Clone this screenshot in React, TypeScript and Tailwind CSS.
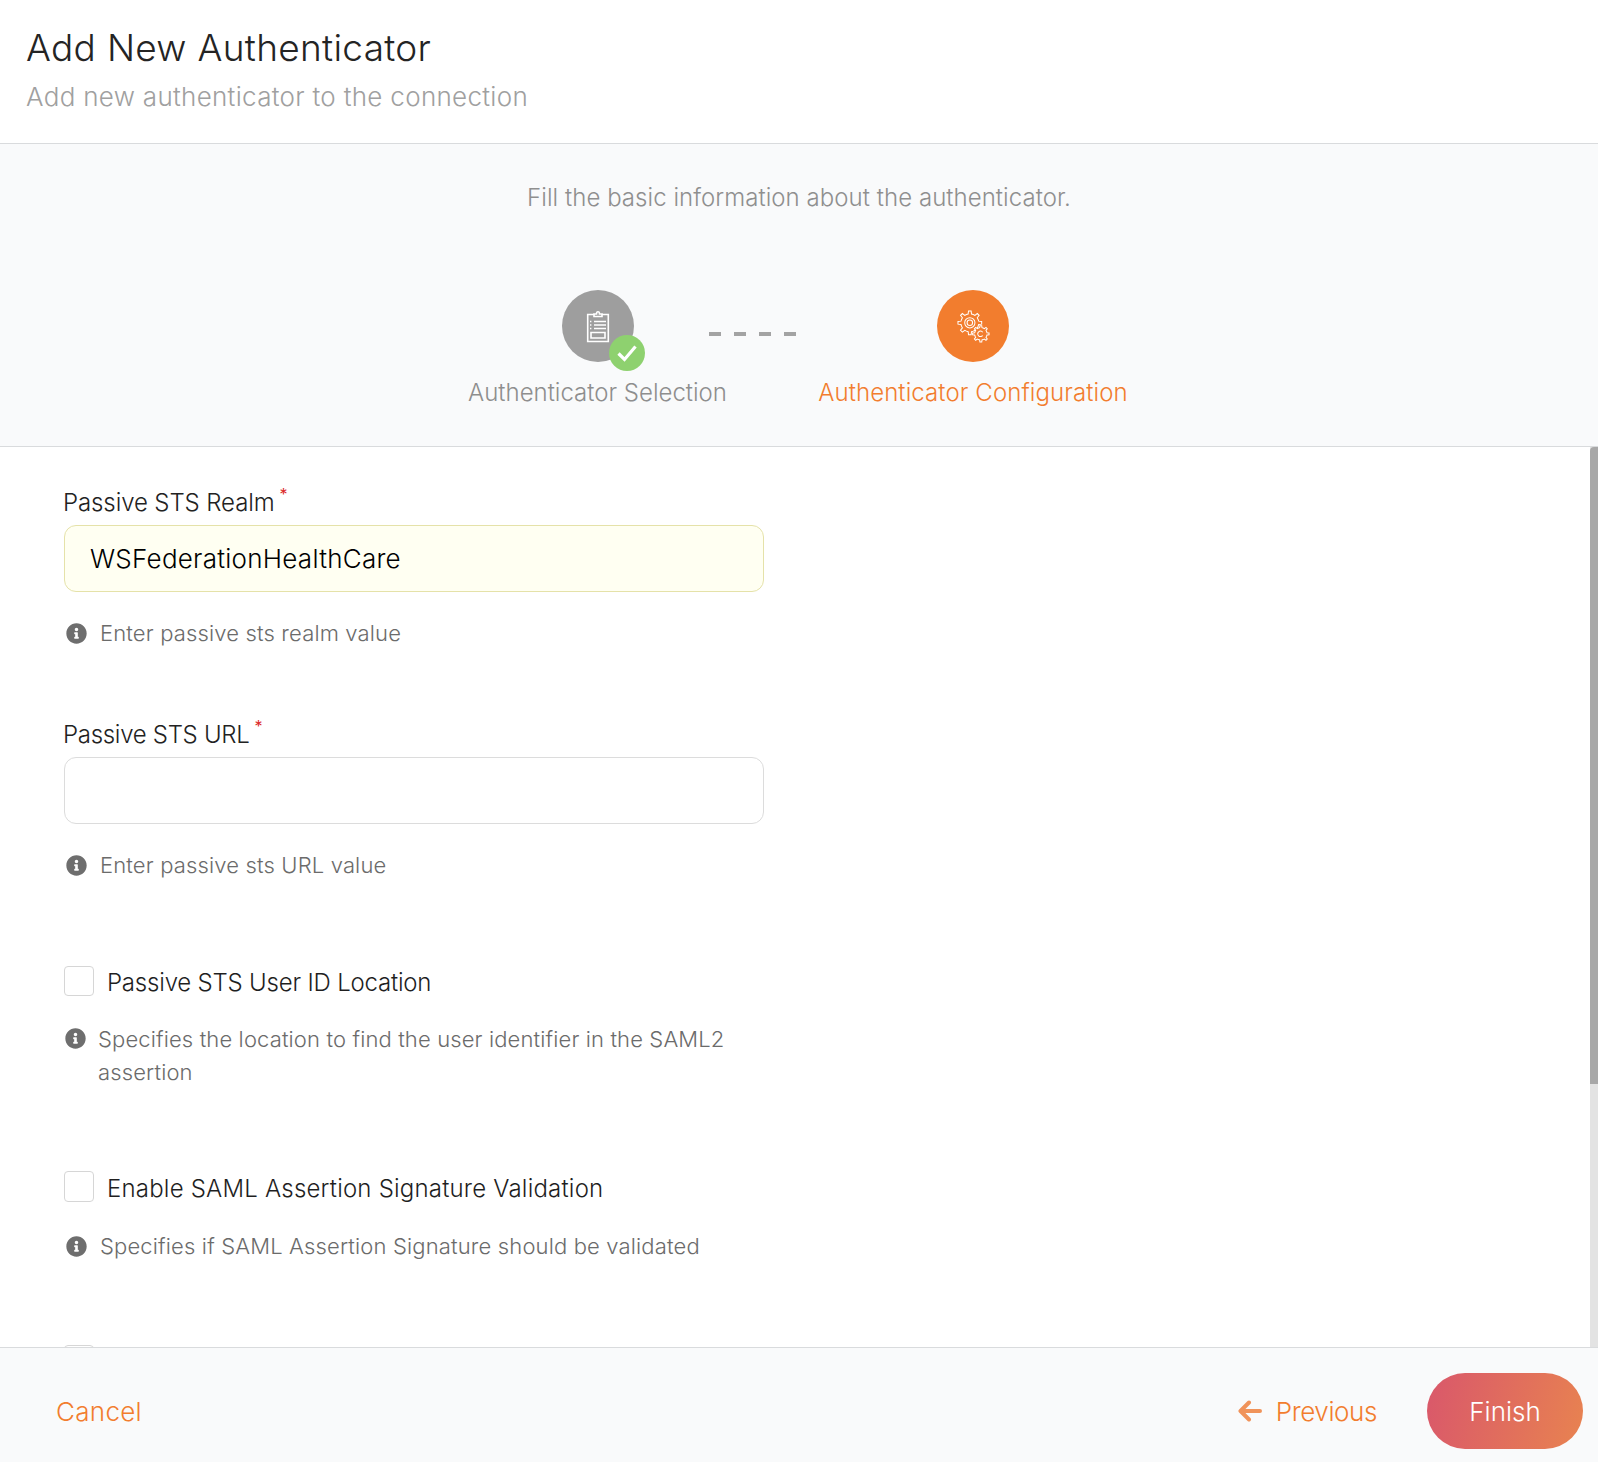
import { FaInfoCircle } from "react-icons/fa";

const font = { fontFamily: "Inter, 'Noto Sans', sans-serif" };

// outline of a cog, used only for the two gears in the step icon
function gearPath(cx: number, cy: number, outer: number, inner: number, teeth: number) {
  const pts: string[] = [];
  const step = (Math.PI * 2) / teeth;
  for (let i = 0; i < teeth; i++) {
    const a = i * step;
    const p = [
      [a - step * 0.5, inner],
      [a - step * 0.24, inner],
      [a - step * 0.14, outer],
      [a + step * 0.14, outer],
      [a + step * 0.24, inner],
    ];
    p.forEach(([t, r]) => {
      pts.push(`${(cx + Math.cos(t) * r).toFixed(2)} ${(cy + Math.sin(t) * r).toFixed(2)}`);
    });
  }
  return "M" + pts.join("L") + "Z";
}

function Help({ children }: { children: React.ReactNode }) {
  return (
    <div className="mt-[25px] mb-[1px] flex items-center h-8">
      <FaInfoCircle className="w-[21px] h-[21px] text-[#6e6e6e] shrink-0 ml-[2px]" />
      <span className="ml-[13px] text-[22px] font-light tracking-[0.15px] text-[#6b6b6b]">{children}</span>
    </div>
  );
}

function TextField({ label, value, labelClass }: { label: string; value?: string; labelClass: string }) {
  return (
    <div>
      <label className={`block -ml-px h-8 leading-8 text-[24px] font-light text-[#222222] ${labelClass}`}>
        {label}
        <sup className="ml-[5px] top-[-11px] text-[16px] text-[#db2828] font-normal">*</sup>
      </label>
      <input
        readOnly
        value={value ?? ""}
        className={`mt-[6px] block w-[700px] h-[67px] rounded-xl border px-[25px] text-[26px] tracking-[0.25px] font-light text-black outline-none ${
          value ? "bg-[#fffff2] border-[#e5e2a9]" : "bg-white border-[#dcdcdc]"
        }`}
      />
    </div>
  );
}

function CheckRow({ label, labelClass, h }: { label: string; labelClass: string; h: string }) {
  return (
    <label className={`flex items-center ${h}`}>
      <input type="checkbox" className={`appearance-none w-[30px] ${h} bg-white rounded border border-[#d6d6d6]`} />
      <span className={`ml-[13px] text-[24px] font-light text-[#1f1f1f] ${labelClass}`}>{label}</span>
    </label>
  );
}

export default function App() {
  return (
    <div className="w-full h-[1462px] flex flex-col bg-white overflow-hidden" style={font}>
      <header className="h-[144px] shrink-0 border-b border-[#d9dbdd] px-[26px] pt-[23px]">
        <h1 className="text-[37px] leading-[50px] font-light text-[#242424] tracking-[0.3px]">Add New Authenticator</h1>
        <p className="mt-[2px] text-[26px] leading-[44px] font-light text-[#a0a0a0] tracking-[0.3px]">
          Add new authenticator to the connection
        </p>
      </header>

      <section className="h-[303px] shrink-0 bg-[#f9fafb] border-b border-[#d9dbdd] flex flex-col items-center">
        <p className="mt-[38px] h-8 leading-8 text-[24px] tracking-[0.05px] font-light text-[#8f8f8f]">
          Fill the basic information about the authenticator.
        </p>
        <div className="mt-[76px] mr-[3px] flex items-start">
          <div className="w-[259px] flex flex-col items-center">
            <div className="relative w-[72px] h-[72px] rounded-full bg-[#9e9e9e] flex items-center justify-center">
              <svg width="24" height="33" viewBox="0 0 24 33" fill="none" stroke="white" strokeWidth="1.600">
                <path d="M8 4h2.500c0-3 3-3 3 0H16v2.500H8z" />
                <path d="M8 4.500H1.700v27h20.600v-27H16" />
                <path d="M8 11.500h12M8 15h12M8 18.500h12" strokeWidth="1.300" />
                <path d="M4 11.500h1.400M4 15h1.400M4 18.500h1.400" strokeWidth="1.300" />
                <path d="M5 22.500h14v5.500H5z" />
              </svg>
              <div className="absolute left-[47px] top-[45px] w-9 h-9 rounded-full bg-[#8ed16f] flex items-center justify-center">
                <svg width="22" height="18" viewBox="0 0 22 18" fill="none" stroke="white" strokeWidth="3.200">
                  <path d="M2.500 9.500l6 6L19.500 2.500" />
                </svg>
              </div>
            </div>
            <span className="mt-[15px] h-8 leading-8 text-[24px] font-light text-[#8e8e8e] whitespace-nowrap">
              Authenticator Selection
            </span>
          </div>

          <div className="w-[92px] -ml-[21px] mr-[21px] mt-[42px] flex justify-center gap-[13px]">
            {[0, 1, 2, 3].map((i) => (
              <div key={i} className="w-3 h-[4px] bg-[#a3a3a3]" />
            ))}
          </div>

          <div className="w-[308px] flex flex-col items-center">
            <div className="w-[72px] h-[72px] rounded-full bg-[#f27d2e] flex items-center justify-center">
              <svg width="33" height="33" viewBox="0 0 36 36" fill="none" stroke="white" strokeWidth="1.100">
                <path d={gearPath(14, 14, 13, 9.800, 8)} />
                <circle cx="14" cy="14" r="5.600" />
                <circle cx="14" cy="14" r="3" />
                <path d={gearPath(26, 26, 9, 6.800, 8)} fill="#f27d2e" />
                <path d="M28 24.200a3 3 0 1 0 0 3.600" />
              </svg>
            </div>
            <span className="mt-[15px] h-8 leading-8 text-[24px] tracking-[0.1px] font-light text-[#f27d2e] whitespace-nowrap">
              Authenticator Configuration
            </span>
          </div>
        </div>
      </section>

      <div className="flex-1 min-h-0 flex">
        <main className="flex-1 min-w-0 overflow-hidden pl-[64px] pt-[40px]">
          <div className="w-[700px]">
            <TextField label="Passive STS Realm" value="WSFederationHealthCare" labelClass="tracking-[-0.1px]" />
            <Help>Enter passive sts realm value</Help>

            <div className="mt-[70px]">
              <TextField label="Passive STS URL" labelClass="tracking-[-0.3px]" />
              <Help>Enter passive sts URL value</Help>
            </div>

            <div className="mt-[85px]">
              <CheckRow label="Passive STS User ID Location" labelClass="pt-[3px] tracking-[-0.2px]" h="h-[30px]" />
              <div className="mt-[27px] mb-[1px] flex items-start">
                <FaInfoCircle className="w-[21px] h-[21px] text-[#6e6e6e] shrink-0 ml-[1px] mt-[5px]" />
                <p className="ml-[12px] w-[670px] text-[22px] leading-[33px] font-light tracking-[0.13px] text-[#6b6b6b]">
                  Specifies the location to find the user identifier in the SAML2 assertion
                </p>
              </div>
            </div>

            <div className="mt-[82px]">
              <CheckRow label="Enable SAML Assertion Signature Validation" labelClass="pt-[5px] tracking-[0.2px]" h="h-[31px]" />
              <div className="pt-[3px]">
                <Help>Specifies if SAML Assertion Signature should be validated</Help>
              </div>
            </div>

            <div className="mt-[83px]">
              <CheckRow label="" labelClass="" h="h-[31px]" />
            </div>
          </div>
        </main>
        <div className="w-2 shrink-0 flex flex-col bg-[#e3e3e3]">
          <div className="h-[637px] bg-[#a8a8a8] rounded-tl" />
        </div>
      </div>

      <footer className="h-[115px] shrink-0 bg-[#f9fafb] border-t border-[#d9dbdd] flex items-start justify-between pl-[56px] pr-[15px] pt-[25px]">
        <button className="h-[76px] text-[26px] tracking-[0.3px] font-light text-[#f27d2e]">Cancel</button>
        <div className="flex items-center">
          <button className="flex items-center h-[76px] text-[26px] tracking-[-0.4px] font-light text-[#f27d2e]">
            <svg width="24" height="22" viewBox="0 0 24 22" fill="none" stroke="#f0935a" strokeWidth="4" strokeLinecap="round" strokeLinejoin="round">
              <path d="M22 11H3M11 2.500L2.500 11l8.500 8.500" />
            </svg>
            <span className="ml-[14px]">Previous</span>
          </button>
          <button className="ml-[50px] w-[156px] h-[76px] rounded-full bg-linear-[105deg,#d9576b,#e88350] text-[26px] font-light text-white">
            Finish
          </button>
        </div>
      </footer>
    </div>
  );
}
